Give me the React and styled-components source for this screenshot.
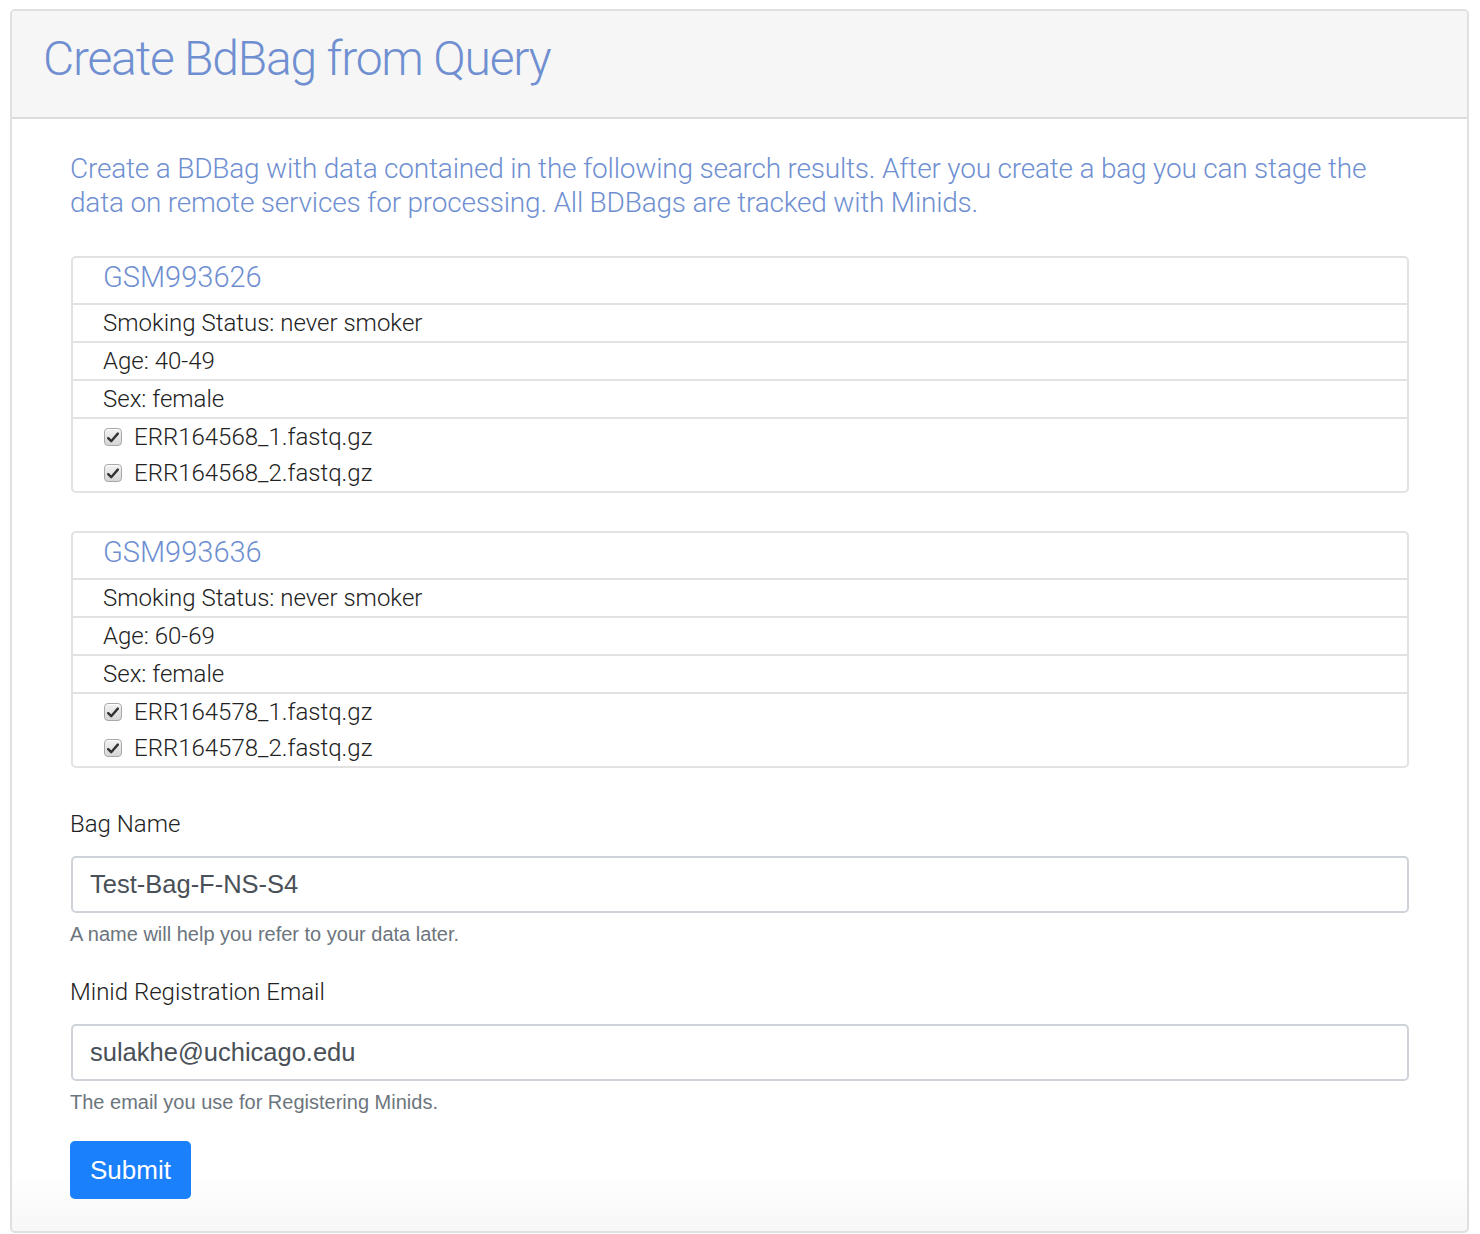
import React from "react";
import styled, { createGlobalStyle } from "styled-components";

const GlobalStyle = createGlobalStyle`
  body {
    margin: 0;
    background: #fff;
    font-family: "Liberation Sans", Arial, sans-serif;
  }
`;

const light = `"Roboto", "Liberation Sans", Arial, sans-serif`;

const Panel = styled.div`
  margin: 9px 11px 0 10px;
  border: 2px solid #e0e0e0;
  border-radius: 5px;
  overflow: hidden;
  background: linear-gradient(to bottom, #fff 0, #fff calc(100% - 60px), #f7f7f7 100%);
`;

const PanelHeader = styled.div`
  background: #f6f6f6;
  border-bottom: 2px solid #dcdcdc;
  height: 106px;
  display: flex;
  align-items: center;
  padding: 0 31px;
`;

const Title = styled.h1`
  margin: 0 0 12px;
  font-family: ${light};
  font-weight: 300;
  font-size: 48px;
  color: #6f8fd1;
  letter-spacing: -1.2px;
`;

const PanelBody = styled.div`
  padding: 33px 58px 32px 58px;
`;

const Intro = styled.p`
  margin: 0 0 36px;
  font-family: ${light};
  font-weight: 300;
  font-size: 28px;
  line-height: 34px;
  letter-spacing: -0.2px;
  color: #6f8fd1;
`;

const SampleCard = styled.div`
  border: 2px solid #e2e2e2;
  border-radius: 5px;
  margin: 0 0 38px 1px;
`;

const SampleHeader = styled.div`
  padding: 0 30px 7px;
  font-family: ${light};
  font-weight: 300;
  font-size: 29px;
  line-height: 38px;
  color: #6f8fd1;
`;

const Row = styled.div`
  border-top: 2px solid #e2e2e2;
  padding: 0 30px;
  font-family: ${light};
  font-weight: 300;
  font-size: 24px;
  line-height: 36px;
  color: #222;
`;

const FileLine = styled.label`
  display: flex;
  align-items: center;
  gap: 12px;
`;

const Check = styled.span`
  width: 18px;
  height: 18px;
  box-sizing: border-box;
  border: 1px solid #a8a8a8;
  border-radius: 4px;
  background: linear-gradient(to bottom, #f2f2f2, #d6d6d6);
  box-shadow: inset 0 1px 0 #fff;
  display: inline-flex;
  align-items: center;
  justify-content: center;
  margin-left: 1px;
`;

const FieldLabel = styled.div`
  font-family: ${light};
  font-weight: 300;
  font-size: 24px;
  line-height: 36px;
  color: #222;
  margin-bottom: 14px;
`;

const Input = styled.input`
  display: block;
  box-sizing: border-box;
  width: calc(100% - 1px);
  margin-left: 1px;
  height: 57px;
  border: 2px solid #ced3d9;
  border-radius: 5px;
  padding: 0 17px;
  font-family: "Liberation Sans", Arial, sans-serif;
  font-size: 25.5px;
  color: #495057;
  background: #fff;
  outline: none;
`;

const Help = styled.div`
  margin-top: 7px;
  font-family: "Liberation Sans", Arial, sans-serif;
  font-size: 20px;
  line-height: 28px;
  color: #6c757d;
`;

const Field = styled.div`
  & + & {
    margin-top: 26px;
  }
`;

const SubmitButton = styled.button`
  margin-top: 25px;
  height: 58px;
  padding: 0 20px;
  border: none;
  border-radius: 5px;
  background: #1a80fb;
  color: #fff;
  font-family: "Liberation Sans", Arial, sans-serif;
  font-size: 26px;
  cursor: pointer;
`;

const CheckMark = () => (
  <Check>
    <svg width="12" height="11" viewBox="0 0 12 11">
      <path d="M1.2 6.2 L4.2 9.2 L10.8 1.6" fill="none" stroke="#333" strokeWidth="2.4" strokeLinecap="round" strokeLinejoin="round" />
    </svg>
  </Check>
);

const samples = [
  { id: "GSM993626", age: "40-49", run: "ERR164568" },
  { id: "GSM993636", age: "60-69", run: "ERR164578" },
];

export default function App() {
  return (
    <>
      <GlobalStyle />
      <Panel>
        <PanelHeader>
          <Title>Create BdBag from Query</Title>
        </PanelHeader>
        <PanelBody>
          <Intro>
            Create a BDBag with data contained in the following search results. After you create a bag you can stage the
            <br />
            data on remote services for processing. All BDBags are tracked with Minids.
          </Intro>
          {samples.map((s) => (
            <SampleCard key={s.id}>
              <SampleHeader>{s.id}</SampleHeader>
              <Row>Smoking Status: never smoker</Row>
              <Row>Age: {s.age}</Row>
              <Row>Sex: female</Row>
              <Row>
                <FileLine>
                  <CheckMark />
                  {s.run}_1.fastq.gz
                </FileLine>
                <FileLine>
                  <CheckMark />
                  {s.run}_2.fastq.gz
                </FileLine>
              </Row>
            </SampleCard>
          ))}
          <Field>
            <FieldLabel>Bag Name</FieldLabel>
            <Input defaultValue="Test-Bag-F-NS-S4" />
            <Help>A name will help you refer to your data later.</Help>
          </Field>
          <Field>
            <FieldLabel>Minid Registration Email</FieldLabel>
            <Input defaultValue="sulakhe@uchicago.edu" />
            <Help>The email you use for Registering Minids.</Help>
          </Field>
          <SubmitButton>Submit</SubmitButton>
        </PanelBody>
      </Panel>
    </>
  );
}
